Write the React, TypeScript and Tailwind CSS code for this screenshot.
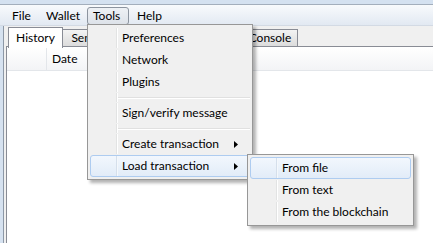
import React from 'react';

type Entry = { label: string; sub?: boolean; active?: boolean } | 'sep';

const toolsMenu: Entry[] = [
  { label: 'Preferences' },
  { label: 'Network' },
  { label: 'Plugins' },
  'sep',
  { label: 'Sign/verify message' },
  'sep',
  { label: 'Create transaction', sub: true },
  { label: 'Load transaction', sub: true, active: true },
];

const loadMenu: Entry[] = [
  { label: 'From file', active: true },
  { label: 'From text' },
  { label: 'From the blockchain' },
];

// tabs hidden under the open menu keep no label
const tabs = [
  { label: 'History', w: 'w-[55px]', active: true },
  { label: 'Send', w: 'w-[44px]' },
  { label: '', w: 'w-[52px]' },
  { label: '', w: 'w-[84px]' },
  { label: 'Console', w: 'w-[55px]' },
];

function Arrow() {
  return (
    <svg width="4" height="7" viewBox="0 0 4 7" className="ml-auto mr-[11px]">
      <path d="M0 0 L4 3.5 L0 7 Z" fill="#000" />
    </svg>
  );
}

function MenuPanel({ items, className }: { items: Entry[]; className: string }) {
  return (
    <div
      className={`absolute z-20 border border-[#979797] bg-[#f0f0f0] p-[2px] shadow-[3px_3px_3px_rgba(0,0,0,0.3)] ${className}`}
    >
      {items.map((it, i) =>
        it === 'sep' ? (
          <div key={i} className="flex h-[9px]">
            <div className="w-[27px] border-r border-[#e2e3e3]" />
            <div className="flex flex-1 flex-col justify-center border-l border-white">
              <div className="h-[1px] bg-[#e0e0e0]" />
              <div className="h-[1px] bg-white" />
            </div>
          </div>
        ) : (
          <div
            key={i}
            className={`flex h-[22px] items-center rounded-[3px] border ${
              it.active
                ? 'border-[#aeccf0] bg-gradient-to-b from-[#f2f7fd] to-[#e2ecf8]'
                : 'border-transparent'
            }`}
          >
            <div className={`h-full w-[26px] border-r ${it.active ? 'border-[#d5dfeb]' : 'border-[#e2e3e3]'}`} />
            <div
              className={`flex h-full flex-1 items-center border-l pl-[4px] ${
                it.active ? 'border-[#f4f8fc]' : 'border-white'
              }`}
            >
              <span>{it.label}</span>
              {it.sub && <Arrow />}
            </div>
          </div>
        )
      )}
    </div>
  );
}

export default function App() {
  return (
    <div className="relative flex h-[243px] w-[433px] flex-col overflow-hidden bg-[#f0f0f0] font-['Segoe_UI','Lato',sans-serif] text-[12px] leading-none text-black">
      {/* window frame edge */}
      <div className="h-[5px] border-b border-[#a3aebc] bg-[#d4e1f0]" />

      {/* Menu bar */}
      <div className="flex h-[21px] border-b border-[#d3dae4] bg-gradient-to-b from-[#f8fafc] to-[#e2e9f2] pt-[2px]">
        <div className="ml-[6px] flex h-[18px] w-[34px] items-center pl-[6px]">File</div>
        <div className="flex h-[18px] w-[47px] items-center pl-[6px]">Wallet</div>
        <div className="flex h-[18px] w-[42px] items-center rounded-[3px] border border-[#8c949f] bg-gradient-to-b from-[#eef1f5] to-[#dde2e9] pl-[5px]">
          Tools
        </div>
        <div className="flex h-[18px] items-center pl-[8px]">Help</div>
      </div>

      {/* Body */}
      <div className="flex flex-1">
        <div className="w-[4px] border-r border-[#8d98a6] bg-[#d6e2f0]" />
        <div className="flex flex-1 flex-col pl-[2px] pt-[1px]">
          <div className="relative z-10 flex h-[20px] items-start pl-[2px]">
            {tabs.map((t, i) =>
              t.active ? (
                <div
                  key={i}
                  className={`${t.w} flex h-[21px] items-center justify-center border border-b-0 border-[#898c95] bg-white`}
                >
                  {t.label}
                </div>
              ) : (
                <div
                  key={i}
                  className={`${t.w} mt-[2px] flex h-[17px] items-center justify-center border border-b-0 border-l-0 border-[#898c95] bg-gradient-to-b from-[#f3f3f3] to-[#dcdcdc]`}
                >
                  {t.label}
                </div>
              )
            )}
          </div>
          <div className="-mt-[1px] flex-1 border border-b-0 border-r-0 border-[#898c95] bg-white">
            <div className="flex h-[24px] border-b border-[#e3e6ea] bg-gradient-to-b from-white to-[#f3f4f6]">
              <div className="w-[40px] border-r border-[#e3e6ea]" />
              <div className="flex items-center pl-[5px]">Date</div>
            </div>
          </div>
        </div>
      </div>

      {/* Tools menu */}
      <MenuPanel items={toolsMenu} className="left-[87px] top-[24px] w-[166px]" />
      {/* Load transaction submenu */}
      <MenuPanel items={loadMenu} className="left-[247px] top-[154px] w-[167px]" />
    </div>
  );
}
